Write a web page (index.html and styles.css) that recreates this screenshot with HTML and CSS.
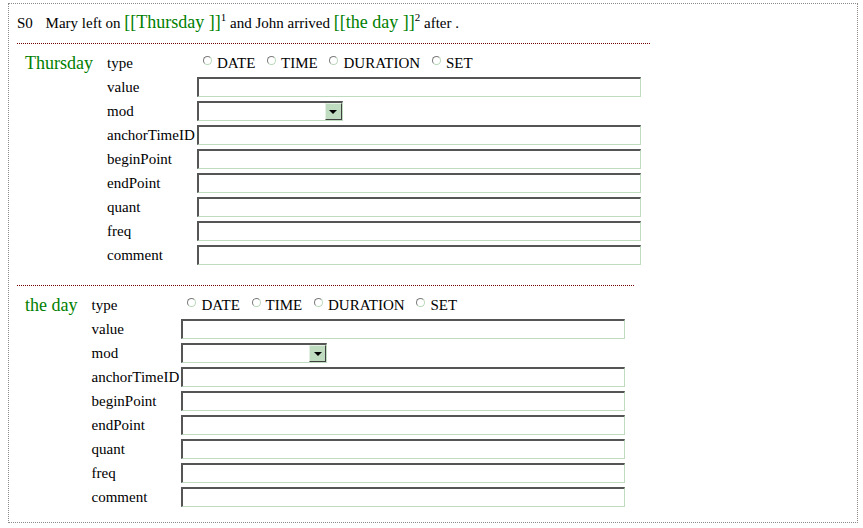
FILE: index.html
```html
<!DOCTYPE html>
<html>
<head>
<meta charset="utf-8">
<link rel="stylesheet" href="styles.css">
</head>
<body>
<div class="box">
  <div class="sentence"><span class="sid">S0</span> Mary left on <span class="ev">[[Thursday ]]</span><sup>1</sup> and John arrived <span class="ev">[[the day ]]</span><sup>2</sup> after .</div>

  <div class="section">
    <div class="name">Thursday</div>
    <div class="fields">
      <div class="lbl">type</div>
      <div class="radios">
        <span class="radio"></span><span class="opt">DATE</span>
        <span class="radio"></span><span class="opt">TIME</span>
        <span class="radio"></span><span class="opt">DURATION</span>
        <span class="radio"></span><span class="opt">SET</span>
      </div>
      <div class="lbl">value</div><div class="input"></div>
      <div class="lbl">mod</div><div class="cell"><div class="select"><span class="btn"><span class="tri"></span></span></div></div>
      <div class="lbl">anchorTimeID</div><div class="input"></div>
      <div class="lbl">beginPoint</div><div class="input"></div>
      <div class="lbl">endPoint</div><div class="input"></div>
      <div class="lbl">quant</div><div class="input"></div>
      <div class="lbl">freq</div><div class="input"></div>
      <div class="lbl">comment</div><div class="input"></div>
    </div>
  </div>

  <div class="section">
    <div class="name">the day</div>
    <div class="fields">
      <div class="lbl">type</div>
      <div class="radios">
        <span class="radio"></span><span class="opt">DATE</span>
        <span class="radio"></span><span class="opt">TIME</span>
        <span class="radio"></span><span class="opt">DURATION</span>
        <span class="radio"></span><span class="opt">SET</span>
      </div>
      <div class="lbl">value</div><div class="input"></div>
      <div class="lbl">mod</div><div class="cell"><div class="select"><span class="btn"><span class="tri"></span></span></div></div>
      <div class="lbl">anchorTimeID</div><div class="input"></div>
      <div class="lbl">beginPoint</div><div class="input"></div>
      <div class="lbl">endPoint</div><div class="input"></div>
      <div class="lbl">quant</div><div class="input"></div>
      <div class="lbl">freq</div><div class="input"></div>
      <div class="lbl">comment</div><div class="input"></div>
    </div>
  </div>
</div>
</body>
</html>
```

FILE: styles.css
```css
html, body {
  background: #ffffff;
}
body {
  margin: 3px 0 0 8px;
  font-family: "Liberation Serif", "Times New Roman", serif;
  font-size: 15px;
  color: #000;
}
.box {
  width: 850px;
  box-sizing: border-box;
  border: 1px dotted #8a8a8a;
  padding: 0 0 0 8px;
}
.sentence {
  box-sizing: border-box;
  height: 39px;
  padding-top: 6px;
  line-height: 24px;
  white-space: nowrap;
}
.sid {
  margin-right: 9px;
}
.ev {
  color: #008000;
  font-size: 18px;
}
sup {
  font-size: 11px;
  line-height: 0;
  vertical-align: 7px;
}
.section {
  display: flex;
  align-items: flex-start;
  width: fit-content;
  border-top: 1px dotted #700000;
  padding: 9px 9px 15px 8px;
}
.section + .section {
  margin-top: 5px;
}
.name {
  color: #008000;
  font-size: 18px;
  line-height: 20px;
  margin-right: 14px;
  white-space: nowrap;
}
.fields {
  display: grid;
  grid-template-columns: 90px 444px;
  row-gap: 4px;
}
.lbl {
  line-height: 20px;
  height: 20px;
  white-space: nowrap;
}
.radios {
  line-height: 20px;
  height: 20px;
  white-space: nowrap;
  padding-left: 6px;
}
.radio {
  display: inline-block;
  box-sizing: border-box;
  width: 9px;
  height: 9px;
  border-radius: 50%;
  border: 1px solid;
  border-color: #7a7a7a #b8d8b8 #b8d8b8 #7a7a7a;
  vertical-align: 3px;
  margin-right: 5px;
}
.opt {
  margin-right: 8px;
}
.input {
  box-sizing: border-box;
  height: 20px;
  border-style: solid;
  border-width: 2px 1px 1px 2px;
  border-color: #555555 #c0dcc0 #c0dcc0 #555555;
}
.cell {
  height: 20px;
}
.select {
  box-sizing: border-box;
  width: 146px;
  height: 20px;
  border-style: solid;
  border-width: 2px 1px 1px 2px;
  border-color: #555555 #c0dcc0 #c0dcc0 #555555;
  display: flex;
  justify-content: flex-end;
}
.btn {
  box-sizing: border-box;
  width: 17px;
  height: 17px;
  background: #c0dcc0;
  border: 1px solid;
  border-color: #e4f0e4 #404040 #404040 #e4f0e4;
  display: flex;
  align-items: center;
  justify-content: center;
}
.tri {
  width: 0;
  height: 0;
  border-left: 4px solid transparent;
  border-right: 4px solid transparent;
  border-top: 4px solid #000;
  margin-top: 1px;
}
```
